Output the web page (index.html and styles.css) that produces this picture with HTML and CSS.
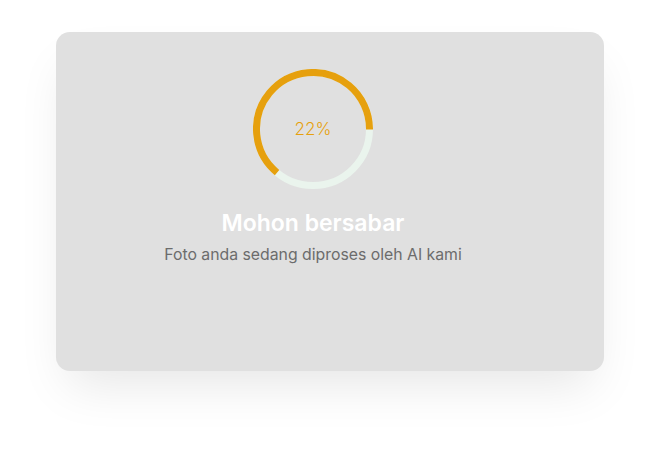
FILE: index.html
```html
<!DOCTYPE html>
<html lang="id">
<head>
<meta charset="utf-8">
<title>Memproses</title>
<link rel="stylesheet" href="styles.css">
</head>
<body>
<div class="page">
  <div class="card">
    <div class="progress">
      <svg class="ring" width="120" height="120" viewBox="0 0 120 120">
        <circle class="track" cx="60" cy="60" r="56.5"/>
        <circle class="bar" cx="60" cy="60" r="56.5" transform="rotate(129.5 60 60)"/>
      </svg>
      <span class="pct">22%</span>
    </div>
    <h1 class="title">Mohon bersabar</h1>
    <p class="subtitle">Foto anda sedang diproses oleh AI kami</p>
  </div>
</div>
</body>
</html>
```
FILE: styles.css
```css
html {
  background: #ffffff;
}
body {
  margin: 0;
  padding: 0;
  font-family: "Inter", "Liberation Sans", sans-serif;
}
.page {
  min-height: 451px;
  box-sizing: border-box;
  padding: 32px 56px;
}
.card {
  width: 548px;
  height: 339px;
  box-sizing: border-box;
  background: #e0e0e0;
  border-radius: 14px;
  box-shadow: 0 25px 50px -12px rgba(0, 0, 0, 0.1);
  display: flex;
  flex-direction: column;
  align-items: center;
  padding: 37px 34px 0 0;
}
.progress {
  position: relative;
  width: 120px;
  height: 120px;
}
.ring {
  display: block;
}
.track {
  fill: none;
  stroke: #eaf4ed;
  stroke-width: 7;
}
.bar {
  fill: none;
  stroke: #e6a00e;
  stroke-width: 7;
  stroke-dasharray: 227.4 400;
}
.pct {
  position: absolute;
  inset: 0;
  display: flex;
  align-items: center;
  justify-content: center;
  color: #e6a00e;
  font-size: 17px;
  font-weight: 300;
}
.title {
  margin: 19px 0 0;
  color: #ffffff;
  font-size: 23px;
  font-weight: 600;
  line-height: 30px;
}
.subtitle {
  margin: 6px 0 0;
  color: #6c6c6c;
  font-size: 15.8px;
  font-weight: 400;
  line-height: 22px;
}
```
